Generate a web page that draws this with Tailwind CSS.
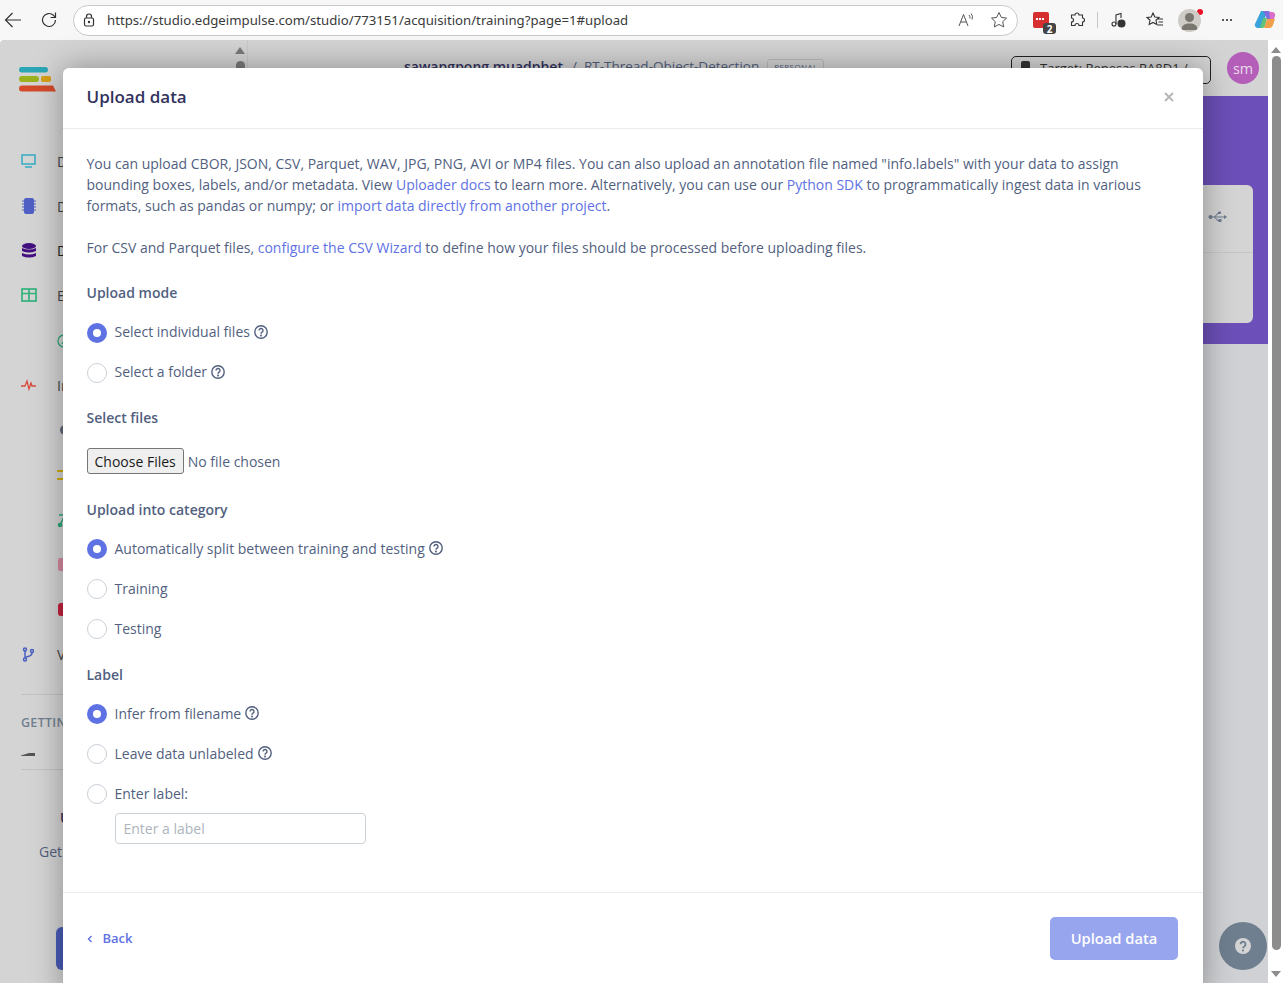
<!DOCTYPE html>
<html lang="en">

<head>
    <meta charset="UTF-8">
    <meta name="viewport" content="width=device-width, initial-scale=1.0">
    <title>Upload data</title>
    <script src="https://cdn.jsdelivr.net/npm/@tailwindcss/browser@4"></script>
</head>

<body class="h-[983px] overflow-hidden bg-white font-['Open_Sans',sans-serif] text-[14px] leading-[21px] text-[#525f7f]">
    <!-- browser toolbar -->
    <div class="flex h-10 items-center bg-[#f7f7f7] text-[#3b3b3b]">
        <svg class="ml-[4px] h-[18px] w-[18px]" viewBox="0 0 18 18" fill="none" stroke="#333" stroke-width="1.2"><path d="M17 9H1.5M8.5 2 1.5 9l7 7" /></svg>
        <svg class="ml-[18px] h-[18px] w-[18px]" viewBox="0 0 18 18" fill="none" stroke="#333" stroke-width="1.2"><path d="M15.5 9a6.5 6.5 0 1 1-2-4.7L15.5 6.500M15.500 1.500v5h-5" /></svg>
        <div class="ml-[15px] flex h-[31px] w-[945px] items-center rounded-full border border-[#c9c9c9] bg-white pl-[9px] pr-[9px]">
            <svg class="h-[14px] w-[12px]" viewBox="0 0 12 14" fill="none" stroke="#333" stroke-width="1.200"><rect x="1.500" y="5" width="9" height="8" rx="1.500" /><path d="M3.500 5V3.500a2.500 2.500 0 0 1 5 0V5" /><circle cx="6" cy="9" r="0.600" /></svg>
            <span class="ml-[12px] font-['Noto_Sans',sans-serif] text-[13.200px] text-[#3a3a3a]">https://studio.edgeimpulse.com/studio/773151/acquisition/training?page=1#upload</span>
            <svg class="ml-auto h-[16px] w-[16px]" viewBox="0 0 16 16" fill="none" stroke="#555" stroke-width="1"><path d="M1 14 5.500 2.500 10 14M2.800 10h5.400M11 3q1.500 1.500.8 3.500M13 1.500q2.500 2.500 1 6" /></svg>
            <svg class="ml-[16px] h-[18px] w-[18px]" viewBox="0 0 18 18" fill="none" stroke="#555" stroke-width="1"><path d="m9 1.500 2.300 4.900 5.200.7-3.800 3.600 1 5.300L9 13.400 4.300 16l1-5.300L1.500 7.100l5.200-.7z" /></svg>
        </div>
        <div class="relative ml-[15px] h-[16px] w-[16px] rounded-[2px] bg-[#d62f2f]">
            <span class="absolute left-[3px] top-[6px] flex gap-[1px]"><i class="h-[2px] w-[2px] bg-white"></i><i class="h-[2px] w-[2px] bg-white"></i><i class="h-[2px] w-[2px] bg-white"></i></span>
            <span class="absolute left-[10px] top-[11px] flex h-[11px] w-[13px] items-center justify-center rounded-[3px] bg-[#444] text-[10px] font-bold leading-none text-white">2</span>
        </div>
        <svg class="ml-[20px] h-[16px] w-[16px]" viewBox="0 0 16 16" fill="none" stroke="#333" stroke-width="1.100"><path d="M6 3a2 2 0 1 1 4 0h3.500v3a2 2 0 1 1 0 4v3.500H10a2 2 0 1 0-4 0H2.500V10a2 2 0 1 0 0-4V3z" /></svg>
        <div class="ml-[12px] h-[16px] w-px bg-[#c8c8c8]"></div>
        <svg class="ml-[12px] h-[16px] w-[16px]" viewBox="0 0 16 16" fill="none" stroke="#333" stroke-width="1.100"><circle cx="4" cy="12" r="2" /><path d="M6 12V3l5-1.500V6" /><circle cx="11.500" cy="11.500" r="3.500" fill="#333" /></svg>
        <svg class="ml-[20px] h-[18px] w-[18px]" viewBox="0 0 18 18" fill="none" stroke="#333" stroke-width="1.100"><path d="m7 2 1.800 4 4.200.5-3 2.800.8 4.200L7 11.400 3.200 13.500 4 9.300 1 6.500 5.200 6zM12 8h5M12.500 11h4.500M11.500 14h5.500" /></svg>
        <div class="relative ml-[14px] h-[23px] w-[23px] overflow-hidden rounded-full bg-[#cfccc7]">
            <svg class="h-[23px] w-[23px]" viewBox="0 0 23 23" fill="#79756f"><circle cx="11.500" cy="8.500" r="4.500" /><path d="M3.500 21c0-5 3.500-6.500 8-6.500s8 1.500 8 6.500z" /></svg>
        </div>
        <span class="-ml-[4px] -mt-[17px] h-[6px] w-[6px] rounded-full bg-[#e81123]"></span>
        <span class="ml-[19px] flex gap-[2px]"><i class="h-[2px] w-[2px] rounded-full bg-[#222]"></i><i class="h-[2px] w-[2px] rounded-full bg-[#222]"></i><i class="h-[2px] w-[2px] rounded-full bg-[#222]"></i></span>
        <svg class="ml-[22px] h-[22px] w-[22px]" viewBox="0 0 22 22">
            <path d="M7 2h6L9 16a3 3 0 0 1-3 3H4a3 3 0 0 1-3-4z" fill="#38a3dc" />
            <path d="M9 2h5a3 3 0 0 1 3 2l2 6h-6z" fill="#7b6fe0" />
            <path d="M6 19 9 9h4l-2 8a3 3 0 0 1-3 2z" fill="#5ec27a" />
            <path d="M13 19h-3l3-9h8l-2 6a4 4 0 0 1-4 3z" fill="#f0a04b" />
            <path d="M15 3h3a3 3 0 0 1 3 4l-1 3h-4z" fill="#d86fc8" />
        </svg>
    </div>

    <!-- dimmed studio page behind the dialog -->
    <div class="relative flex h-[943px]">
        <div class="flex min-w-0 flex-1 overflow-hidden rounded-tl-[4px] bg-[#d4d4d4]">
            <aside class="relative w-[248px] shrink-0 border-r border-[#c8c8c8] pl-[19px]">
                <!-- sidebar scrollbar -->
                <div class="absolute right-[2px] top-[7px] flex w-[10px] flex-col items-center">
                    <svg class="h-[7px] w-[10px]" viewBox="0 0 10 7" fill="#7a7a7a"><path d="M5 0 10 7H0z" /></svg>
                    <div class="mt-[7px] h-[20px] w-[9px] rounded-full bg-[#7a7a7a]"></div>
                </div>
                <svg class="mt-[27px] h-[25px] w-[37px]" viewBox="0 0 37 25">
                    <rect width="29" height="5.500" rx="2.700" fill="#2ba6b5" />
                    <rect y="9" width="20" height="6" rx="3" fill="#9bb21c" />
                    <rect x="22" y="9" width="10" height="6" rx="2" fill="#d9a016" />
                    <path d="M3 18.500h31l3 6H3a3 3 0 0 1 0-6z" fill="#d44a2a" />
                </svg>
                <nav class="mt-[47px] text-[#444]">
                    <div class="flex h-[44.800px] items-center"><svg class="h-[15px] w-[20px]" viewBox="0 0 20 15" fill="none" stroke="#36abc4" stroke-width="1.500"><rect x="3" y="1" width="13" height="9" /><path d="M6 13h7" /></svg><span class="ml-[18px]">Dashboard</span></div>
                    <div class="flex h-[44.800px] items-center"><svg class="h-[16px] w-[20px]" viewBox="0 0 20 16"><rect x="5" y="0" width="10" height="16" rx="2" fill="#4f5fc4" /><path d="M3 3h14M3 6h14M3 9h14M3 12h14" stroke="#4f5fc4" stroke-dasharray="2 10" /></svg><span class="ml-[18px]">Devices</span></div>
                    <div class="flex h-[44.800px] items-center"><svg class="h-[16px] w-[20px]" viewBox="0 0 20 16" fill="#44107f"><ellipse cx="10" cy="3" rx="7" ry="3" /><path d="M3 5q7 3 14 0v3q-7 3-14 0zM3 10q7 3 14 0v3q-7 3-14 0z" /></svg><span class="ml-[18px] text-[#222]">Data acquisition</span></div>
                    <div class="flex h-[44.800px] items-center"><svg class="h-[15px] w-[20px]" viewBox="0 0 20 15" fill="none" stroke="#35b27c" stroke-width="1.700"><rect x="3" y="1" width="14" height="12" /><path d="M3 5.500h14M10 1v12" /></svg><span class="ml-[18px]">Experiments</span></div>
                    <div class="flex h-[44.800px] items-center pl-[38px]"><svg class="h-[14px] w-[14px]" viewBox="0 0 14 14" fill="none" stroke="#2aa876" stroke-width="1.300"><circle cx="7" cy="7" r="6" /><path d="m5 10 3-5" /></svg></div>
                    <div class="flex h-[44.800px] items-center"><svg class="h-[14px] w-[20px]" viewBox="0 0 20 14" fill="none" stroke="#d9483b" stroke-width="1.300"><path d="M2 8h4l2-5 2 8 2-6 1 3h4" /></svg><span class="ml-[18px]">Impulse design</span></div>
                    <div class="flex h-[44.800px] items-center pl-[41px]"><span class="h-[10px] w-[6px] rounded-l-full bg-[#5f6b7a]"></span></div>
                    <div class="flex h-[44.800px] items-center pl-[38px]"><span class="h-[10px] w-[8px] border-y-2 border-r-2 border-[#d1ab11]"></span></div>
                    <div class="flex h-[44.800px] items-center pl-[38px]"><svg class="h-[14px] w-[10px]" viewBox="0 0 10 14" fill="none" stroke="#2aa876" stroke-width="1.500"><path d="M2 2h6L3 12" /><circle cx="3" cy="12" r="1.500" fill="#2aa876" /></svg></div>
                    <div class="flex h-[44.800px] items-center pl-[39px]"><span class="h-[13px] w-[8px] rounded-l-[2px] bg-[#d68ba0]"></span></div>
                    <div class="flex h-[44.800px] items-center pl-[39px]"><span class="h-[13px] w-[8px] rounded-l-[3px] bg-[#c4223f]"></span></div>
                    <div class="flex h-[44.800px] items-center"><svg class="ml-[3px] h-[15px] w-[14px]" viewBox="0 0 14 15" fill="none" stroke="#4a5fc1" stroke-width="1.500"><circle cx="3" cy="2.500" r="1.500" /><circle cx="3" cy="12.500" r="1.500" /><circle cx="10" cy="4" r="1.500" /><path d="M3 4v7M10 6q0 3-6 4" /></svg><span class="ml-[21px]">Versioning</span></div>
                </nav>
                <div class="mt-[17px] ml-[2px] border-t border-[#c2c2c2] pt-[18px] text-[12.500px] font-semibold leading-[20px] tracking-[0.3px] text-[#71808f]">GETTING STARTED</div>
                <div class="ml-[2px] flex h-[37px] items-center border-b border-[#c2c2c2] pt-[7px]"><svg class="h-[4px] w-[14px]" viewBox="0 0 14 4" fill="#555"><path d="M0 3.500 8 1h6v3H0z" /></svg></div>
                <p class="ml-[41px] mt-[37px] font-semibold text-[#32325d]">Upload</p>
                <p class="ml-[20px] mt-[13px] text-[#525f7f]">Get started</p>
                <div class="ml-[37px] mt-[65px] h-[43px] w-[150px] rounded-[6px] bg-[#4a5cb8]"></div>
            </aside>
            <main class="min-w-0 flex-1">
                <div class="relative flex h-[56px] items-center">
                    <span class="ml-[156px] -mt-[4px] whitespace-nowrap font-semibold text-[#32325d]">sawangpong muadphet</span>
                    <span class="ml-[9px] -mt-[4px] whitespace-nowrap text-[13.500px] text-[#525f7f]">/&nbsp; RT-Thread-Object-Detection</span>
                    <span class="ml-[8px] -mt-[2px] rounded-[3px] border border-[#bbb] px-[6px] text-[8px] leading-[14px] tracking-[0.4px]">PERSONAL</span>
                    <div class="ml-auto mr-[57px] mt-[4px] flex h-[28px] w-[200px] shrink-0 items-start gap-[10px] rounded-[5px] border border-[#222] pl-[9px] text-[13px] text-[#333]">
                        <span class="mt-[4px] h-[13px] w-[9px] rounded-[2px] bg-[#333]"></span>
                        <span class="mt-[1px] whitespace-nowrap">Target: Renesas RA8D1 /</span>
                    </div>
                    <span class="absolute right-[9px] top-[12px] flex h-[32px] w-[32px] items-center justify-center rounded-full bg-[#b45eb9] text-[14.400px] text-[#e8dcea]">sm</span>
                </div>
                <div class="h-[248px] overflow-hidden bg-[#6c4fb8] pl-[24px] pr-[15px] pt-[89px]">
                    <div class="h-[138px] rounded-[6px] bg-[#d4d4d4]">
                        <div class="flex h-[68px] items-center justify-end border-b border-[#c6c6c6] pb-[4px] pr-[26px]">
                            <svg class="h-[12px] w-[19px]" viewBox="0 0 19 12" fill="#6c7a8c"><circle cx="2.500" cy="6" r="2" /><path d="M2 5.500h16v1H2z" /><path d="m19 6-3-2v4z" /><rect x="10" y="0.500" width="3" height="2.500" rx="1" /><path d="m6 6 3.500-4h1v1h-.5l-3 3z" /><path d="m6 6 3.500 4h2v-1H10L7 6z" /><rect x="10.500" y="8" width="3" height="3" /></svg>
                        </div>
                    </div>
                </div>
                <div class="h-full bg-[#d0d1d4]"></div>
            </main>
        </div>
        <!-- page scrollbar -->
        <div class="flex w-[15px] shrink-0 flex-col items-center bg-white">
            <svg class="mt-[7px] h-[6px] w-[10px]" viewBox="0 0 10 6" fill="#8c8c8c"><path d="M5 0 10 6H0z" /></svg>
            <div class="mt-[3px] ml-[1px] h-[894px] w-[9px] rounded-full bg-[#8c8c8c]"></div>
            <svg class="mt-[21px] h-[6px] w-[10px]" viewBox="0 0 10 6" fill="#8c8c8c"><path d="M5 6 10 0H0z" /></svg>
        </div>
        <button class="absolute left-[1219px] top-[882px] flex h-[48px] w-[48px] items-center justify-center rounded-full bg-[#6f7f8f]">
            <svg class="h-[16px] w-[16px]" viewBox="0 0 16 16"><circle cx="8" cy="8" r="8" fill="#d4d4d4" /><path d="M5.500 6.300a2.500 2.500 0 1 1 3.800 2.100c-.9.600-1.300 1-1.300 1.800" fill="none" stroke="#6f7f8f" stroke-width="1.800" /><circle cx="8" cy="12.500" r="1.100" fill="#6f7f8f" /></svg>
        </button>

        <!-- dialog -->
        <div class="absolute left-[63px] top-[28px] flex h-[930px] w-[1140px] flex-col rounded-[6px] bg-white shadow-[0_0_32px_rgba(0,0,0,0.35)]">
            <div class="flex h-[61px] shrink-0 items-center justify-between border-b border-[#e9ecef] pb-[2px] pl-[23.500px] pr-[29px]">
                <h5 class="text-[17px] font-semibold leading-[24px] text-[#32325d]">Upload data</h5>
                <svg class="-mt-[1px] h-[10px] w-[10px]" viewBox="0 0 10 10" stroke="#b5b5b5" stroke-width="1.800"><path d="m1 1 8 8M9 1 1 9" /></svg>
            </div>
            <div class="flex-1 pl-[23.500px] pr-[24px] pt-[24px]">
                <p>You can upload CBOR, JSON, CSV, Parquet, WAV, JPG, PNG, AVI or MP4 files. You can also upload an annotation file named "info.labels" with your data to assign<br>bounding boxes, labels, and/or metadata. View <a class="text-[#5e72e4]">Uploader docs</a> to learn more. Alternatively, you can use our <a class="text-[#5e72e4]">Python SDK</a> to programmatically ingest data in various<br>formats, such as pandas or numpy; or <a class="text-[#5e72e4]">import data directly from another project</a>.</p>
                <p class="mt-[21px]">For CSV and Parquet files, <a class="text-[#5e72e4]">configure the CSV Wizard</a> to define how your files should be processed before uploading files.</p>

                <h6 class="mt-[24px] font-semibold">Upload mode</h6>
                <div class="mt-[9px]">
                    <div class="flex h-[40px] items-center"><span class="mt-[1px] flex h-[20px] w-[20px] items-center justify-center rounded-full bg-[#5e72e4]"><i class="h-[8px] w-[8px] rounded-full bg-white"></i></span><span class="ml-[8px] -mt-[1px]">Select individual files</span><svg class="ml-[4px] h-[14px] w-[14px]" viewBox="0 0 14 14" fill="none" stroke="#525f7f" stroke-width="1.400"><circle cx="7" cy="7" r="6.200" /><path d="M5 5.500a2 2 0 1 1 3 1.700c-.7.400-1 .8-1 1.500" /><circle cx="7" cy="10.500" r="0.400" /></svg></div>
                    <div class="flex h-[40px] items-center"><span class="mt-[1px] h-[20px] w-[20px] rounded-full border border-[#cad1d7] bg-white"></span><span class="ml-[8px] -mt-[1px]">Select a folder</span><svg class="ml-[4px] h-[14px] w-[14px]" viewBox="0 0 14 14" fill="none" stroke="#525f7f" stroke-width="1.400"><circle cx="7" cy="7" r="6.200" /><path d="M5 5.500a2 2 0 1 1 3 1.700c-.7.400-1 .8-1 1.500" /><circle cx="7" cy="10.500" r="0.400" /></svg></div>
                </div>

                <h6 class="mt-[15px] font-semibold">Select files</h6>
                <input type="file" multiple class="mt-[20px] block h-[26px] w-[300px] leading-[26px] file:mr-[4px] file:h-[26px] file:rounded-[3px] file:border file:border-solid file:border-[#767676] file:bg-[#efefef] file:px-[7px] file:text-[#1a1a1a]">

                <h6 class="mt-[25px] font-semibold">Upload into category</h6>
                <div class="mt-[8px]">
                    <div class="flex h-[40px] items-center"><span class="mt-[1px] flex h-[20px] w-[20px] items-center justify-center rounded-full bg-[#5e72e4]"><i class="h-[8px] w-[8px] rounded-full bg-white"></i></span><span class="ml-[8px]">Automatically split between training and testing</span><svg class="ml-[4px] h-[14px] w-[14px]" viewBox="0 0 14 14" fill="none" stroke="#525f7f" stroke-width="1.400"><circle cx="7" cy="7" r="6.200" /><path d="M5 5.500a2 2 0 1 1 3 1.700c-.7.400-1 .8-1 1.500" /><circle cx="7" cy="10.500" r="0.400" /></svg></div>
                    <div class="flex h-[40px] items-center"><span class="mt-[1px] h-[20px] w-[20px] rounded-full border border-[#cad1d7] bg-white"></span><span class="ml-[8px]">Training</span></div>
                    <div class="flex h-[40px] items-center"><span class="mt-[1px] h-[20px] w-[20px] rounded-full border border-[#cad1d7] bg-white"></span><span class="ml-[8px]">Testing</span></div>
                </div>

                <h6 class="mt-[16px] font-semibold">Label</h6>
                <div class="mt-[8px]">
                    <div class="flex h-[40px] items-center"><span class="mt-[2px] flex h-[20px] w-[20px] items-center justify-center rounded-full bg-[#5e72e4]"><i class="h-[8px] w-[8px] rounded-full bg-white"></i></span><span class="ml-[8px]">Infer from filename</span><svg class="ml-[4px] h-[14px] w-[14px]" viewBox="0 0 14 14" fill="none" stroke="#525f7f" stroke-width="1.400"><circle cx="7" cy="7" r="6.200" /><path d="M5 5.500a2 2 0 1 1 3 1.700c-.7.400-1 .8-1 1.500" /><circle cx="7" cy="10.500" r="0.400" /></svg></div>
                    <div class="flex h-[40px] items-center"><span class="mt-[2px] h-[20px] w-[20px] rounded-full border border-[#cad1d7] bg-white"></span><span class="ml-[8px]">Leave data unlabeled</span><svg class="ml-[4px] h-[14px] w-[14px]" viewBox="0 0 14 14" fill="none" stroke="#525f7f" stroke-width="1.400"><circle cx="7" cy="7" r="6.200" /><path d="M5 5.500a2 2 0 1 1 3 1.700c-.7.400-1 .8-1 1.500" /><circle cx="7" cy="10.500" r="0.400" /></svg></div>
                    <div class="flex h-[40px] items-center"><span class="mt-[2px] h-[20px] w-[20px] rounded-full border border-[#cad1d7] bg-white"></span><span class="ml-[8px]">Enter label:</span></div>
                </div>
                <input type="text" placeholder="Enter a label" class="ml-[28px] block h-[31px] w-[251px] rounded-[4px] border border-[#cad1d7] px-[8px] placeholder:text-[#adb5bd]">
            </div>
            <div class="flex h-[106px] shrink-0 items-start justify-between border-t border-[#e9ecef] pl-[23.500px] pr-[25px] pt-[24px]">
                <a class="mt-[11px] flex items-center text-[13px] font-semibold text-[#5e72e4]"><svg class="h-[8px] w-[6px]" viewBox="0 0 6 8" fill="none" stroke="#5e72e4" stroke-width="1.400"><path d="M4.500 1 1.500 4l3 3" /></svg><span class="ml-[10px]">Back</span></a>
                <button class="h-[43px] w-[128px] rounded-[5px] bg-[#97a4ee] text-[14.700px] font-semibold text-white">Upload data</button>
            </div>
        </div>
    </div>
</body>

</html>
